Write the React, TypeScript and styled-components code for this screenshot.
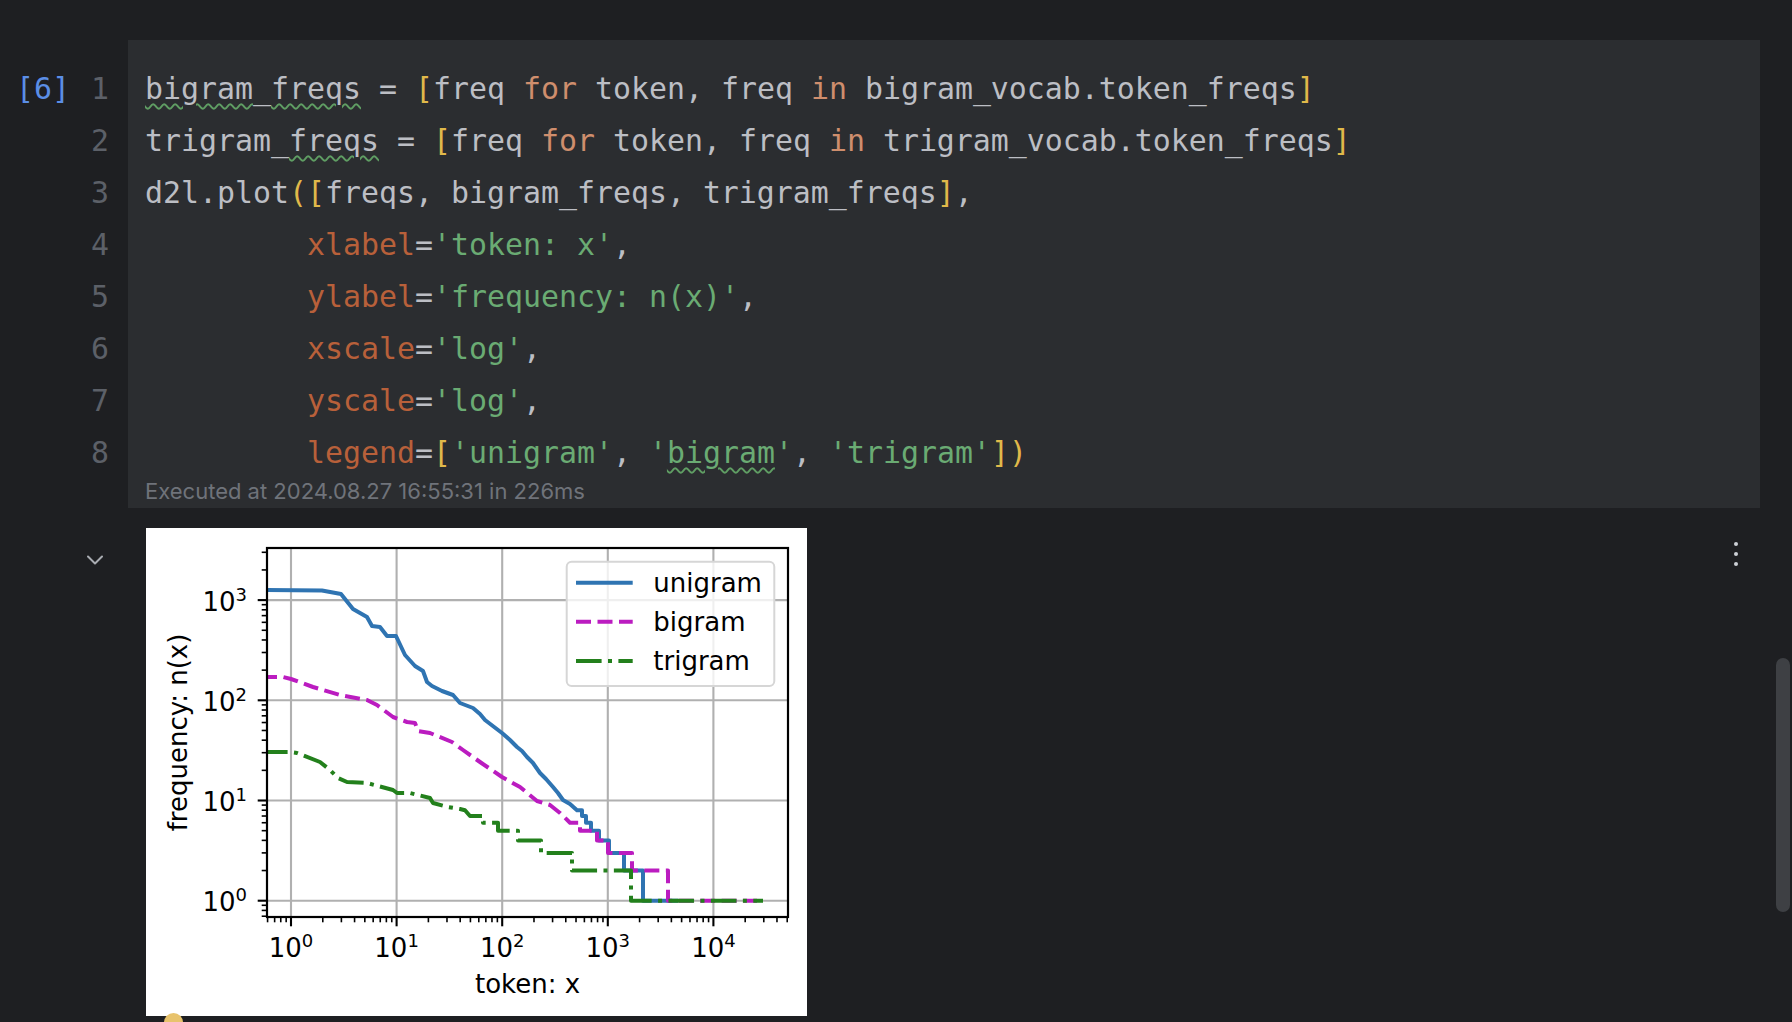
import React from "react";
import styled, { createGlobalStyle } from "styled-components";

const GlobalStyle = createGlobalStyle`
  html, body { margin: 0; padding: 0; background: #1e1f22; }
  body { overflow: hidden; }
`;

const Page = styled.div`
  position: relative;
  width: 1792px;
  height: 1022px;
  overflow: hidden;
  box-sizing: border-box;
  padding-top: 40px;
  background: #1e1f22;
  font-family: Inter, "Noto Sans", sans-serif;
`;

const CellRow = styled.div`
  display: grid;
  grid-template-columns: 128px 1632px;
`;

const Gutter = styled.div`
  display: flex;
  justify-content: space-between;
  padding: 23px 19px 0 16px;
  font-family: "DejaVu Sans Mono", monospace;
  font-size: 29.9px;
  line-height: 52px;
`;

const ExecCount = styled.div`
  color: #5b8ee6;
`;

const LineNumbers = styled.div`
  display: flex;
  flex-direction: column;
  align-items: flex-end;
  color: #5c6068;
`;

const CodeCell = styled.div`
  background: #2b2d30;
  padding: 23px 0 5px 17px;
`;

const Code = styled.div`
  font-family: "DejaVu Sans Mono", monospace;
  font-size: 29.9px;
  line-height: 52px;
  color: #bcbec4;
`;

const Line = styled.div`
  white-space: pre;
  height: 52px;
`;

const tokenColors = {
  kw: "#cf8e6d",
  arg: "#b8603a",
  str: "#6aab73",
  br: "#e0b94a",
};

const Tok = styled.span<{ $k: keyof typeof tokenColors }>`
  color: ${(p) => tokenColors[p.$k]};
`;

const Squiggle = styled.span`
  text-decoration-line: underline;
  text-decoration-style: wavy;
  text-decoration-color: #5f9e63;
  text-decoration-thickness: 1.5px;
  text-underline-offset: 4px;
`;

const ExecInfo = styled.div`
  font-family: Inter, "Noto Sans", sans-serif;
  font-size: 22px;
  line-height: 24px;
  color: #6f737a;
`;

const OutputRow = styled.div`
  display: grid;
  grid-template-columns: 128px 1fr;
  width: 1760px;
  margin-top: 20px;
`;

const OutputGutter = styled.div`
  display: flex;
  justify-content: flex-end;
  align-items: flex-start;
  padding: 24px 25px 0 0;
`;

const OutputBody = styled.div`
  display: flex;
  align-items: flex-start;
  padding-left: 18px;
`;

const PlotFrame = styled.div`
  width: 661px;
  height: 488px;
  background: #ffffff;
  flex: none;
`;

const Kebab = styled.div`
  display: flex;
  flex-direction: column;
  gap: 6px;
  margin: 14px 22px 0 auto;
`;

const Dot = styled.span`
  width: 4px;
  height: 4px;
  border-radius: 50%;
  background: #cdd0d6;
`;

const ScrollThumb = styled.div`
  position: absolute;
  left: 1776px;
  top: 658px;
  width: 14px;
  height: 254px;
  border-radius: 7px;
  background: #3e4044;
`;

const Marker = styled.div`
  position: absolute;
  left: 164px;
  top: 1013px;
  width: 19px;
  height: 19px;
  border-radius: 50%;
  background: #e8c36c;
`;

const INDENT = "         ";

const X = (l: number) => 291 + l * 105.6;
const Y = (l: number) => 900.7 - l * 100.2;

const AX = { x0: 267, x1: 788, y0: 548, y1: 917 };

const minorX: number[] = [];
const minorY: number[] = [];
for (let d = -1; d <= 4; d++) {
  for (let k = 2; k <= 9; k++) {
    const vx = X(d + Math.log10(k));
    if (vx >= AX.x0 && vx <= AX.x1) minorX.push(vx);
    const vy = Y(d + Math.log10(k));
    if (vy >= AX.y0 && vy <= AX.y1) minorY.push(vy);
  }
}

const BLUE =
  "M262,590 L322,590.5 L341,594 L353,609 L367,617 L372,626 L380,627 L387,636 L396,636 L405,655 L415,666 L423,671 L427,682 L432,686 L442,691 L453,695 L460,703 L473,708 L480,714 L485,720 L502,733 L510,740 L517,747 L522,751 L527,757 L533,763 L540,773 L546,779 L553,787 L558,793 L563,800 L570,804 L577,810.2 L582,810.2 L582,816 L586,816 L586,822.7 L591,822.7 L591,830.7 L599,830.7 L599,840.4 L609,840.4 L609,852.9 L624,852.9 L624,870.5 L643,870.5 L643,900.7 L678,900.7";
const MAGENTA =
  "M262,677 L283,677 L291,679 L313,687 L340,695 L367,700 L377,705 L393,717 L407,722 L415,723 L418,731 L430,733 L452,742 L463,750 L480,762 L502,777 L520,787 L537,801 L550,805 L560,813 L570,822.7 L580,822.7 L580,830.7 L597,830.7 L597,840.4 L608,840.4 L608,852.9 L632,852.9 L632,870.5 L668,870.5 L668,900.7 L757,900.7";
const GREEN =
  "M262,752 L290,752 L297,753 L320,762 L330,770 L338,778 L347,782 L367,783 L393,790 L397,793 L410,793 L430,798 L433,803 L448,807 L460,809 L465,810.2 L470,816 L483,816 L483,822.7 L498,822.7 L498,830.7 L518,830.7 L518,840.4 L541,840.4 L541,852.9 L572,852.9 L572,870.5 L631,870.5 L631,900.7 L763,900.7";

const C_BLUE = "#2f74b2";
const C_MAG = "#bb1cc0";
const C_GREEN = "#23801c";
const DASH = "15 6.5";
const DASHDOT = "25.6 6.4 4 6.4";

function Plot() {
  return (
    <svg width="661" height="488" viewBox="0 0 661 488" fontFamily="'DejaVu Sans', sans-serif">
      <defs>
        <clipPath id="axclip">
          <rect x={AX.x0} y={AX.y0} width={AX.x1 - AX.x0} height={AX.y1 - AX.y0} />
        </clipPath>
      </defs>
      <g transform="translate(-146 -528)">
        <g stroke="#b0b0b0" strokeWidth="2.1">
          {[0, 1, 2, 3, 4].map((l) => (
            <line key={"gx" + l} x1={X(l)} x2={X(l)} y1={AX.y0} y2={AX.y1} />
          ))}
          {[0, 1, 2, 3].map((l) => (
            <line key={"gy" + l} x1={AX.x0} x2={AX.x1} y1={Y(l)} y2={Y(l)} />
          ))}
        </g>
        <g clipPath="url(#axclip)" fill="none" strokeWidth="4" strokeLinejoin="round">
          <path d={BLUE} stroke={C_BLUE} />
          <path d={MAGENTA} stroke={C_MAG} strokeDasharray={DASH} />
          <path d={GREEN} stroke={C_GREEN} strokeDasharray={DASHDOT} />
        </g>
        <rect x={AX.x0} y={AX.y0} width={AX.x1 - AX.x0} height={AX.y1 - AX.y0} fill="none" stroke="#000" strokeWidth="2.2" />
        <g stroke="#000">
          {[0, 1, 2, 3, 4].map((l) => (
            <line key={"tx" + l} x1={X(l)} x2={X(l)} y1={AX.y1} y2={AX.y1 + 9.3} strokeWidth="2.1" />
          ))}
          {[0, 1, 2, 3].map((l) => (
            <line key={"ty" + l} x1={AX.x0 - 9.3} x2={AX.x0} y1={Y(l)} y2={Y(l)} strokeWidth="2.1" />
          ))}
          {minorX.map((v, i) => (
            <line key={"mx" + i} x1={v} x2={v} y1={AX.y1} y2={AX.y1 + 5.3} strokeWidth="1.6" />
          ))}
          {minorY.map((v, i) => (
            <line key={"my" + i} x1={AX.x0 - 5.3} x2={AX.x0} y1={v} y2={v} strokeWidth="1.6" />
          ))}
        </g>
        <g fill="#000" fontSize="26">
          {[0, 1, 2, 3].map((l) => (
            <text key={"ly" + l} x={247} y={Y(l) + 10.5} textAnchor="end">
              10
              <tspan dy="-10" fontSize="18">{l}</tspan>
            </text>
          ))}
          {[0, 1, 2, 3, 4].map((l) => (
            <text key={"lx" + l} x={X(l)} y={957} textAnchor="middle">
              10
              <tspan dy="-10" fontSize="18">{l}</tspan>
            </text>
          ))}
          <text x={527.5} y={993} textAnchor="middle">token: x</text>
          <text transform="translate(186.5 732.5) rotate(-90)" textAnchor="middle">frequency: n(x)</text>
        </g>
        <rect x={566.7} y={561.7} width={207.6} height={124.3} rx={5} fill="#ffffff" fillOpacity="0.8" stroke="#d6d6d6" strokeWidth="2" />
        <g strokeWidth="4" fill="none">
          <line x1={576} x2={632.7} y1={582.7} y2={582.7} stroke={C_BLUE} />
          <line x1={576} x2={632.7} y1={621.7} y2={621.7} stroke={C_MAG} strokeDasharray={DASH} />
          <line x1={576} x2={632.7} y1={661} y2={661} stroke={C_GREEN} strokeDasharray={DASHDOT} />
        </g>
        <g fill="#000" fontSize="26">
          <text x={653.3} y={592}>unigram</text>
          <text x={653.3} y={631}>bigram</text>
          <text x={653.3} y={670}>trigram</text>
        </g>
      </g>
    </svg>
  );
}

function Chevron() {
  return (
    <svg width="16" height="16" viewBox="0 0 16 16" fill="none">
      <polyline points="1,4.5 8,11.5 15,4.5" stroke="#a9acb2" strokeWidth="2" strokeLinecap="round" strokeLinejoin="round" />
    </svg>
  );
}

export default function App() {
  return (
    <>
      <GlobalStyle />
      <Page>
        <CellRow>
          <Gutter>
            <ExecCount>[6]</ExecCount>
            <LineNumbers>
              {[1, 2, 3, 4, 5, 6, 7, 8].map((n) => (
                <Line key={n}>{n}</Line>
              ))}
            </LineNumbers>
          </Gutter>
          <CodeCell>
            <Code>
              <Line>
                <Squiggle>bigram</Squiggle>_<Squiggle>freqs</Squiggle>{" = "}<Tok $k="br">[</Tok>{"freq "}<Tok $k="kw">for</Tok>{" token, freq "}<Tok $k="kw">in</Tok>{" bigram_vocab.token_freqs"}<Tok $k="br">]</Tok>
              </Line>
              <Line>
                {"trigram_"}<Squiggle>freqs</Squiggle>{" = "}<Tok $k="br">[</Tok>{"freq "}<Tok $k="kw">for</Tok>{" token, freq "}<Tok $k="kw">in</Tok>{" trigram_vocab.token_freqs"}<Tok $k="br">]</Tok>
              </Line>
              <Line>
                {"d2l.plot"}<Tok $k="br">(</Tok><Tok $k="br">[</Tok>{"freqs, bigram_freqs, trigram_freqs"}<Tok $k="br">]</Tok>{","}
              </Line>
              <Line>
                {INDENT}<Tok $k="arg">xlabel</Tok>{"="}<Tok $k="str">'token: x'</Tok>{","}
              </Line>
              <Line>
                {INDENT}<Tok $k="arg">ylabel</Tok>{"="}<Tok $k="str">'frequency: n(x)'</Tok>{","}
              </Line>
              <Line>
                {INDENT}<Tok $k="arg">xscale</Tok>{"="}<Tok $k="str">'log'</Tok>{","}
              </Line>
              <Line>
                {INDENT}<Tok $k="arg">yscale</Tok>{"="}<Tok $k="str">'log'</Tok>{","}
              </Line>
              <Line>
                {INDENT}<Tok $k="arg">legend</Tok>{"="}<Tok $k="br">[</Tok><Tok $k="str">'unigram'</Tok>{", "}<Tok $k="str">'<Squiggle>bigram</Squiggle>'</Tok>{", "}<Tok $k="str">'trigram'</Tok><Tok $k="br">]</Tok><Tok $k="br">)</Tok>
              </Line>
            </Code>
            <ExecInfo>Executed at 2024.08.27 16:55:31 in 226ms</ExecInfo>
          </CodeCell>
        </CellRow>
        <OutputRow>
          <OutputGutter>
            <Chevron />
          </OutputGutter>
          <OutputBody>
            <PlotFrame>
              <Plot />
            </PlotFrame>
            <Kebab>
              <Dot />
              <Dot />
              <Dot />
            </Kebab>
          </OutputBody>
        </OutputRow>
        <ScrollThumb />
        <Marker />
      </Page>
    </>
  );
}
